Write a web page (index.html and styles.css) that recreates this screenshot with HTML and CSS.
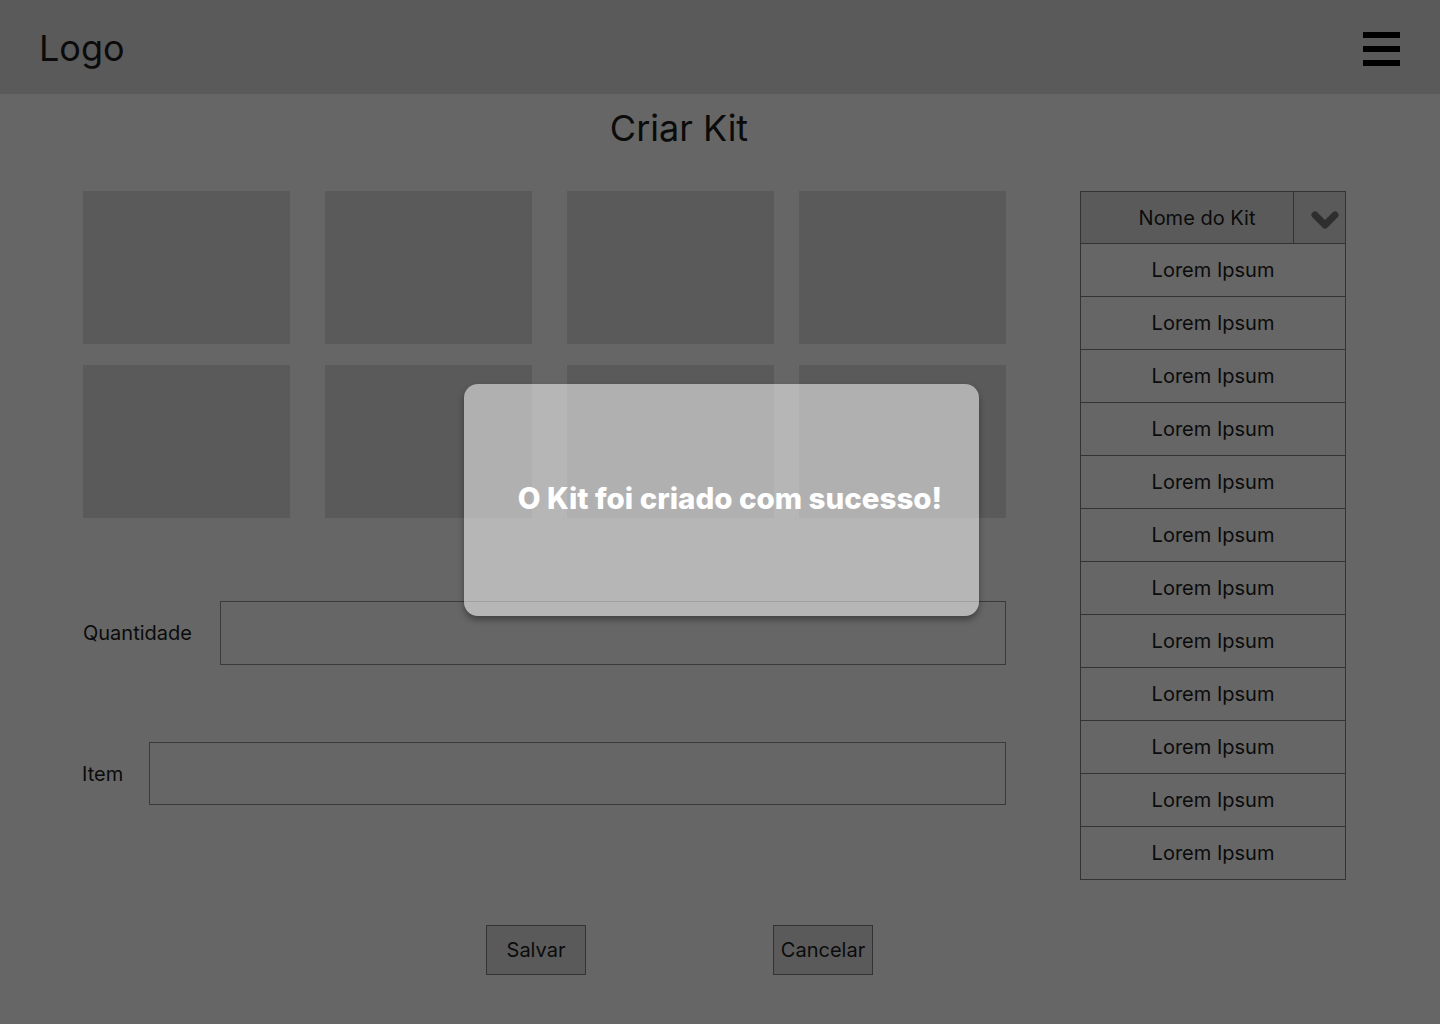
FILE: index.html
```html
<!DOCTYPE html>
<html lang="pt">
<head>
<meta charset="utf-8">
<title>Criar Kit</title>
<link rel="stylesheet" href="styles.css">
</head>
<body>
<header class="topbar">
  <div class="logo">Logo</div>
  <div class="menu" aria-label="menu"><span></span><span></span><span></span></div>
</header>
<main class="page">
  <h1 class="title">Criar Kit</h1>
  <div class="content">
    <section class="left">
      <div class="grid">
        <div class="tile"></div><div class="tile"></div><div class="tile"></div><div class="tile"></div>
        <div class="tile"></div><div class="tile"></div><div class="tile"></div><div class="tile"></div>
      </div>
      <div class="field field-qty">
        <label class="label">Quantidade</label>
        <div class="input input-qty"></div>
      </div>
      <div class="field field-item">
        <label class="label">Item</label>
        <div class="input input-item"></div>
      </div>
      <div class="actions">
        <button class="btn">Salvar</button>
        <button class="btn">Cancelar</button>
      </div>
    </section>
    <aside class="dropdown">
      <div class="dd-head">
        <div class="dd-title">Nome do Kit</div>
        <div class="dd-toggle">
          <svg width="28" height="22" viewBox="0 0 28 22"><path d="M4 6 L14 16 L24 6" fill="none" stroke="#2e2e2e" stroke-width="7" stroke-linecap="round" stroke-linejoin="round"/></svg>
        </div>
      </div>
      <div class="dd-row">Lorem Ipsum</div>
      <div class="dd-row">Lorem Ipsum</div>
      <div class="dd-row">Lorem Ipsum</div>
      <div class="dd-row">Lorem Ipsum</div>
      <div class="dd-row">Lorem Ipsum</div>
      <div class="dd-row">Lorem Ipsum</div>
      <div class="dd-row">Lorem Ipsum</div>
      <div class="dd-row">Lorem Ipsum</div>
      <div class="dd-row">Lorem Ipsum</div>
      <div class="dd-row">Lorem Ipsum</div>
      <div class="dd-row">Lorem Ipsum</div>
      <div class="dd-row">Lorem Ipsum</div>
    </aside>
  </div>
  <div class="modal">O Kit foi criado com sucesso!</div>
</main>
</body>
</html>
```
FILE: styles.css
```css
* { box-sizing: border-box; }
html, body { margin: 0; padding: 0; }
body {
  background: #666666;
  font-family: Inter, "Noto Sans", sans-serif;
  color: #0b0b0b;
  width: 1440px;
  height: 1024px;
  overflow: hidden;
}
.topbar {
  height: 94px;
  background: #5a5a5a;
  display: flex;
  align-items: center;
  justify-content: space-between;
  padding: 0 40px 0 39px;
}
.logo {
  font-size: 36px;
  line-height: 1;
  margin-top: 2px;
}
.menu {
  width: 37px;
  display: flex;
  flex-direction: column;
  gap: 8px;
  margin-top: 4px;
}
.menu span {
  display: block;
  height: 6px;
  background: #000;
}
.page {
  position: relative;
  padding-top: 12px;
}
.title {
  margin: 0;
  padding-right: 82px;
  text-align: center;
  font-weight: 400;
  font-size: 36px;
  line-height: 44px;
}
.content {
  display: flex;
  align-items: flex-start;
  margin-top: 41px;
  padding-left: 83px;
}
.left { width: 923px; }
.grid {
  display: grid;
  grid-template-columns: 242px 242px 232px 207px;
  grid-auto-rows: 153px;
  row-gap: 21px;
}
.tile {
  width: 207px;
  background: #5a5a5a;
}
.field {
  display: flex;
  align-items: center;
}
.label { font-size: 20px; }
.field-qty { margin-top: 83px; }
.field-qty .label { width: 137px; }
.field-item { margin-top: 77px; margin-left: -1px; }
.field-item .label { width: 67px; }
.input {
  flex: 1;
  border: 1px solid #3a3a3a;
}
.input-qty { height: 64px; }
.input-item { height: 63px; }
.actions {
  display: flex;
  gap: 187px;
  margin-top: 120px;
  padding-left: 403px;
}
.btn {
  width: 100px;
  height: 50px;
  background: #5a5a5a;
  border: 1px solid #333;
  font-family: inherit;
  font-size: 20px;
  color: #0b0b0b;
  padding: 0;
}
.dropdown {
  margin-left: 74px;
  width: 266px;
  border: 1px solid #333;
  border-bottom: none;
}
.dd-head {
  display: flex;
  height: 52px;
  background: #5a5a5a;
  border-bottom: 1px solid #333;
}
.dd-title {
  flex: 1;
  display: flex;
  align-items: center;
  justify-content: center;
  padding-left: 20px;
  font-size: 20px;
}
.dd-toggle {
  width: 52px;
  border-left: 1px solid #333;
  display: flex;
  align-items: center;
  justify-content: center;
  padding: 5px 0 0 10px;
}
.dd-row {
  height: 53px;
  border-bottom: 1px solid #333;
  display: flex;
  align-items: center;
  justify-content: center;
  font-size: 20px;
}
.modal {
  position: absolute;
  left: 464px;
  top: 290px;
  width: 515px;
  height: 232px;
  border-radius: 14px;
  background: rgba(255, 255, 255, 0.52);
  box-shadow: 0 4px 6px rgba(0, 0, 0, 0.35);
  display: flex;
  align-items: center;
  justify-content: center;
  padding: 0 0 4px 17px;
  color: #fff;
  font-weight: 800;
  font-size: 29.5px;
}
```
